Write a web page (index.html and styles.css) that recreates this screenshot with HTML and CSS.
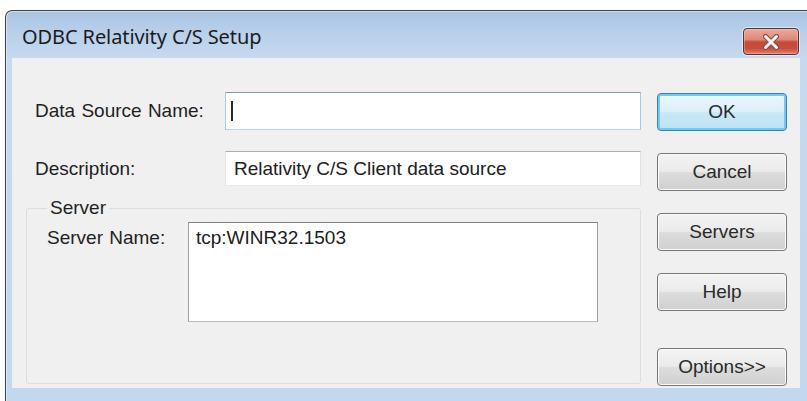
FILE: index.html
```html
<!DOCTYPE html>
<html>
<head>
<meta charset="utf-8">
<title>ODBC Relativity C/S Setup</title>
<link rel="stylesheet" href="styles.css">
</head>
<body>
<div class="window">
  <div class="titlebar">
    <span class="title">ODBC Relativity C/S Setup</span>
    <button class="close" aria-label="Close">
      <svg width="22" height="16" viewBox="0 0 22 16">
        <path d="M5.5 2.5 L16.5 13.5 M16.5 2.5 L5.5 13.5" stroke="#8a4a40" stroke-width="5" stroke-linecap="round" fill="none"/>
        <path d="M5.5 2.5 L16.5 13.5 M16.5 2.5 L5.5 13.5" stroke="#f4f4f4" stroke-width="3" stroke-linecap="round" fill="none"/>
      </svg>
    </button>
  </div>
  <div class="client">
    <div class="form">
      <div class="row row-dsn">
        <label class="label">Data Source Name:</label>
        <div class="edit edit-focus"><span class="caret"></span></div>
      </div>
      <div class="row row-desc">
        <label class="label">Description:</label>
        <div class="edit">Relativity C/S Client data source</div>
      </div>
      <fieldset class="group">
        <legend>Server</legend>
        <div class="server-row">
          <label class="label">Server Name:</label>
          <div class="listbox">tcp:WINR32.1503</div>
        </div>
      </fieldset>
    </div>
    <div class="buttons">
      <button class="btn btn-default">OK</button>
      <button class="btn">Cancel</button>
      <button class="btn">Servers</button>
      <button class="btn">Help</button>
      <button class="btn btn-options">Options&gt;&gt;</button>
    </div>
  </div>
</div>
</body>
</html>
```
FILE: styles.css
```css
html, body {
  margin: 0;
  height: 100%;
  overflow: hidden;
  background: #ffffff;
}

body {
  box-sizing: border-box;
  padding: 10px 0 0 5px;
  font-family: "Liberation Sans", Arial, sans-serif;
  color: #222222;
}

/* Window frame */
.window {
  box-sizing: border-box;
  width: 802px;
  height: 391px;
  border-top: 1px solid #3d4148;
  border-left: 1px solid #3d4148;
  border-top-left-radius: 7px;
  padding: 0 7px 0 6px;
  display: flex;
  flex-direction: column;
  background: linear-gradient(180deg, #a9c4e4 0px, #b9d0eb 22px, #c5d9f0 47px, #c2d8ef 100%);
  box-shadow: inset 1px 1px 0 rgba(255, 255, 255, 0.45);
}

.titlebar {
  height: 47px;
  display: flex;
  align-items: flex-start;
  padding-left: 10px;
}

.title {
  margin-top: 13px;
  font-family: "Noto Sans", "Open Sans", sans-serif;
  font-size: 20px;
  line-height: 26px;
  color: #1b1b1b;
  letter-spacing: -0.1px;
}

.close {
  margin: 17px 1px 0 auto;
  width: 56px;
  height: 27px;
  padding: 0;
  border: 1px solid #5d2e29;
  border-radius: 4px;
  display: flex;
  align-items: center;
  justify-content: center;
  background: linear-gradient(180deg, #e9aa9c 0%, #dc8a78 42%, #c9493a 52%, #c84d3b 78%, #dd8270 100%);
  box-shadow: 0 0 0 1px rgba(255, 255, 255, 0.55), inset 0 0 0 1px rgba(255, 220, 210, 0.35);
}

/* Client area */
.client {
  height: 330px;
  box-sizing: border-box;
  background: #f0f0f0;
  display: flex;
  gap: 16px;
  padding: 34px 13px 0 14px;
}

.form {
  width: 615px;
  display: flex;
  flex-direction: column;
}

.label {
  font-size: 19px;
  line-height: 20px;
  color: #1f1f1f;
  word-spacing: 1px;
}

.row {
  display: grid;
  grid-template-columns: 190px 416px;
  align-items: center;
  padding-left: 9px;
}

.row-desc {
  margin-top: 21px;
}

.edit {
  box-sizing: border-box;
  background: #ffffff;
  border: 1px solid;
  border-color: #abadb3 #e2e3ea #e3e9ef #e2e3ea;
  height: 35px;
  display: flex;
  align-items: center;
  padding-left: 8px;
  font-size: 19px;
  color: #202020;
}

.edit-focus {
  height: 38px;
  padding-left: 5px;
  border-color: #6e9fd1 #a9c9ea #bcd5ee #a9c9ea;
}

.caret {
  width: 2px;
  height: 20px;
  background: #2a2a2a;
}

/* Server group box */
.group {
  box-sizing: border-box;
  margin: 12px 0 0 0;
  height: 186px;
  padding: 4px 0 0 20px;
  border: 1px solid #d5dfe5;
  border-radius: 3px;
}

.group legend {
  padding: 0 3px;
  font-size: 19px;
  line-height: 20px;
  color: #1f1f1f;
}

.server-row {
  display: grid;
  grid-template-columns: 141px 410px;
  align-items: start;
}

.server-row .label {
  margin-top: 6px;
}

.listbox {
  box-sizing: border-box;
  height: 100px;
  background: #ffffff;
  border: 1px solid;
  border-color: #7f7f7f #a0a0a0 #b9b9b9 #a0a0a0;
  padding: 5px 0 0 7px;
  font-size: 19px;
  line-height: 20px;
  color: #202020;
}

/* Push buttons */
.buttons {
  width: 130px;
  display: flex;
  flex-direction: column;
}

.btn {
  box-sizing: border-box;
  height: 38px;
  width: 130px;
  margin-top: 22px;
  padding: 0;
  border: 1px solid #767676;
  border-radius: 4px;
  font-family: "Liberation Sans", Arial, sans-serif;
  font-size: 19px;
  color: #2a2a2a;
  background: linear-gradient(180deg, #f3f3f3 0%, #ebebeb 48%, #dcdcdc 52%, #d0d0d0 100%);
  box-shadow: inset 0 0 0 1px #fbfbfb;
}

.btn:first-child {
  margin-top: 1px;
}

.btn-default {
  border-color: #3c7fb1;
  background: linear-gradient(180deg, #eaf6fd 0%, #dcf0fb 48%, #c9e8f8 52%, #bde2f5 100%);
  box-shadow: inset 0 0 0 2px #6bcdf3;
}

.btn-options {
  margin-top: 37px;
}
```
